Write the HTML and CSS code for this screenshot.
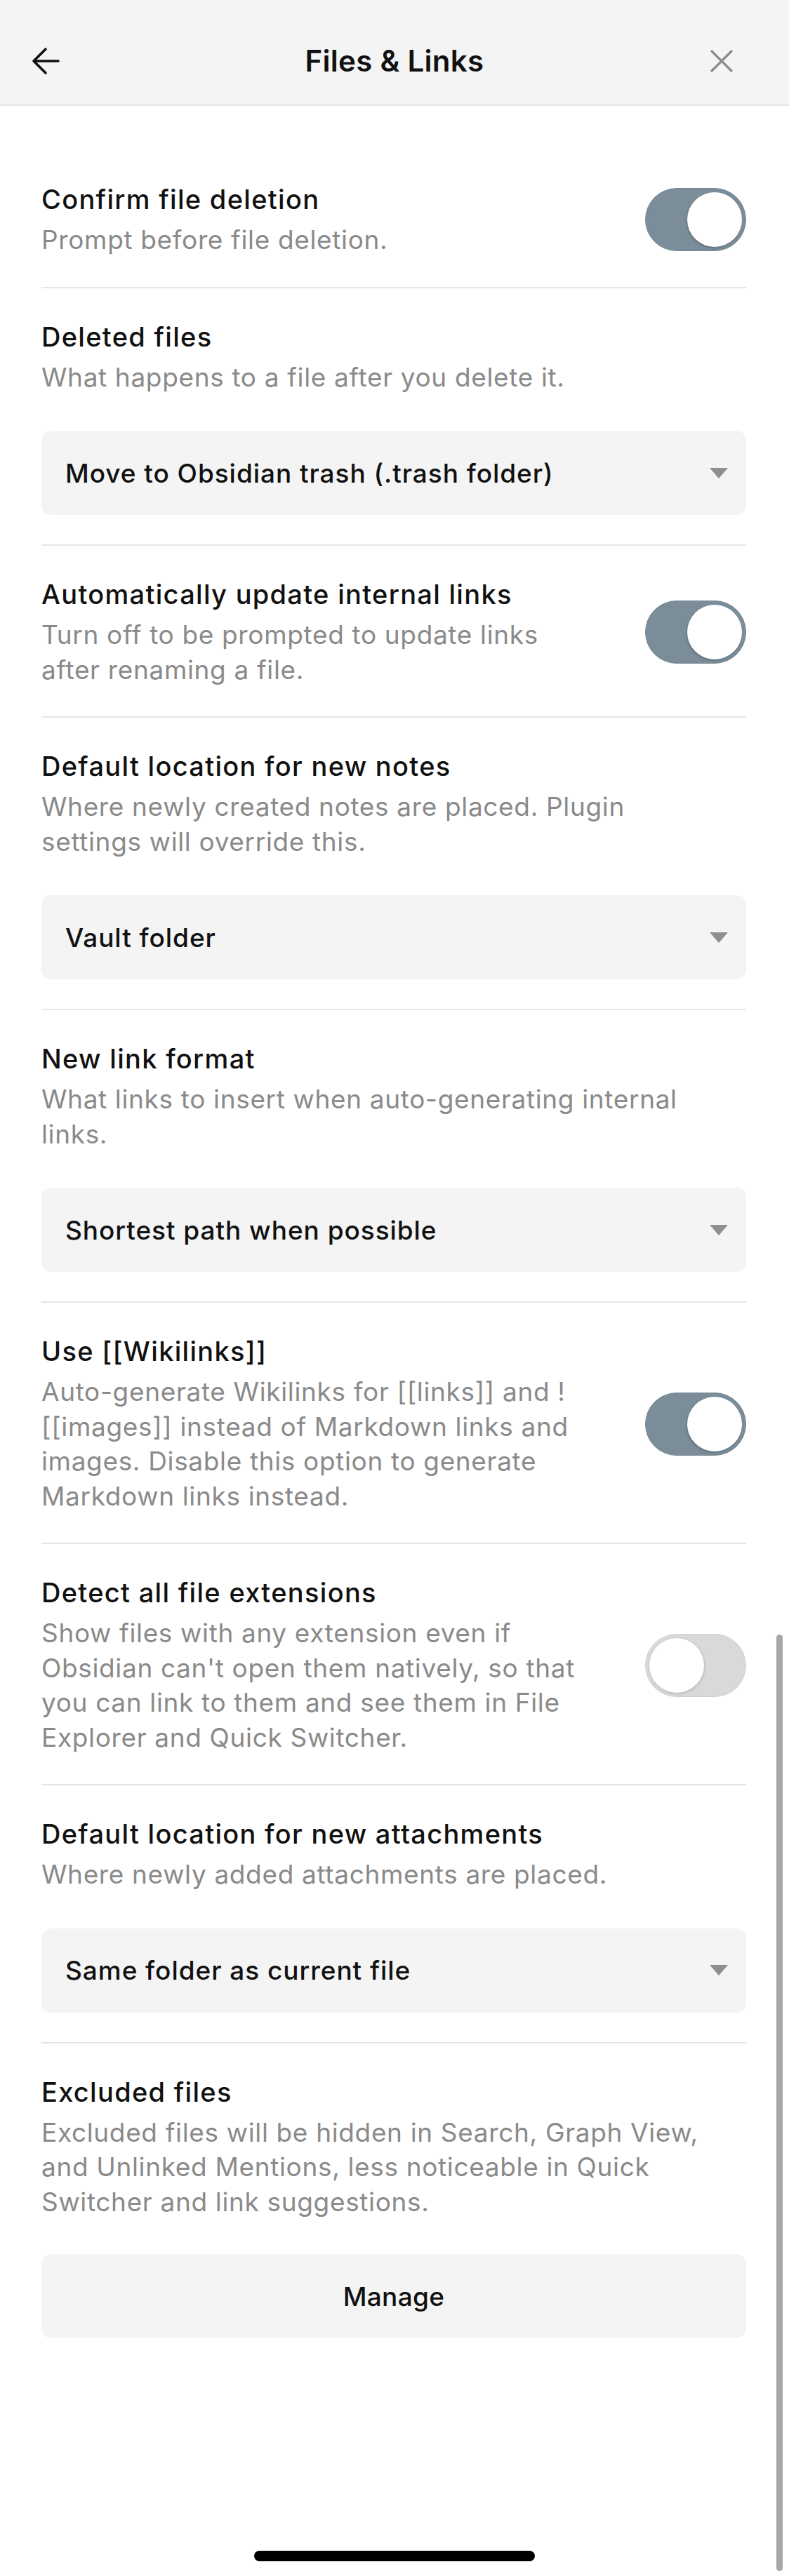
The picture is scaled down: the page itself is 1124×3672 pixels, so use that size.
FILE: index.html
```html
<!DOCTYPE html>
<html lang="en">
<head>
<meta charset="utf-8">
<title>Files &amp; Links</title>
<link rel="stylesheet" href="styles.css">
</head>
<body>
<div class="screen">
  <header class="topbar">
    <button class="icon-btn back" aria-label="Back">
      <svg viewBox="0 0 40 40" width="40" height="40"><path d="M38 20H4M20 3L3 20l17 17" fill="none" stroke="#111" stroke-width="3.6" stroke-linecap="round" stroke-linejoin="round"/></svg>
    </button>
    <h1 class="title">Files &amp; Links</h1>
    <button class="icon-btn close" aria-label="Close">
      <svg viewBox="0 0 34 34" width="34" height="34"><path d="M3 3l28 28M31 3L3 31" fill="none" stroke="#8a8a8a" stroke-width="3.2" stroke-linecap="round"/></svg>
    </button>
  </header>

  <main class="settings">
    <section class="item row">
      <div class="info">
        <div class="name">Confirm file deletion</div>
        <div class="desc">Prompt before file deletion.</div>
      </div>
      <div class="toggle on"><span class="knob"></span></div>
    </section>

    <section class="item">
      <div class="info">
        <div class="name">Deleted files</div>
        <div class="desc">What happens to a file after you delete it.</div>
      </div>
      <div class="select"><span>Move to Obsidian trash (.trash folder)</span><i class="caret"></i></div>
    </section>

    <section class="item row">
      <div class="info">
        <div class="name">Automatically update internal links</div>
        <div class="desc">Turn off to be prompted to update links after renaming a file.</div>
      </div>
      <div class="toggle on"><span class="knob"></span></div>
    </section>

    <section class="item">
      <div class="info wide">
        <div class="name">Default location for new notes</div>
        <div class="desc">Where newly created notes are placed. Plugin settings will override this.</div>
      </div>
      <div class="select"><span>Vault folder</span><i class="caret"></i></div>
    </section>

    <section class="item">
      <div class="info wide">
        <div class="name">New link format</div>
        <div class="desc">What links to insert when auto-generating internal links.</div>
      </div>
      <div class="select"><span>Shortest path when possible</span><i class="caret"></i></div>
    </section>

    <section class="item row">
      <div class="info">
        <div class="name">Use [[Wikilinks]]</div>
        <div class="desc">Auto-generate Wikilinks for [[links]] and ![[images]] instead of Markdown links and images. Disable this option to generate Markdown links instead.</div>
      </div>
      <div class="toggle on"><span class="knob"></span></div>
    </section>

    <section class="item row">
      <div class="info">
        <div class="name">Detect all file extensions</div>
        <div class="desc">Show files with any extension even if Obsidian can't open them natively, so that you can link to them and see them in File Explorer and Quick Switcher.</div>
      </div>
      <div class="toggle"><span class="knob"></span></div>
    </section>

    <section class="item">
      <div class="info wide">
        <div class="name">Default location for new attachments</div>
        <div class="desc">Where newly added attachments are placed.</div>
      </div>
      <div class="select"><span>Same folder as current file</span><i class="caret"></i></div>
    </section>

    <section class="item last">
      <div class="info">
        <div class="name">Excluded files</div>
        <div class="desc">Excluded files will be hidden in Search, Graph View, and Unlinked Mentions, less noticeable in Quick Switcher and link suggestions.</div>
      </div>
      <button class="button">Manage</button>
    </section>
  </main>

  <div class="scrollbar"></div>
  <div class="home-indicator"></div>
</div>
</body>
</html>
```

FILE: styles.css
```css
* { box-sizing: border-box; }

html, body {
  margin: 0;
  padding: 0;
  background: #fff;
}

body {
  font-family: Inter, "Noto Sans", "Liberation Sans", sans-serif;
  color: #111;
}

.screen {
  position: relative;
  width: 1124px;
  height: 3672px;
  overflow: hidden;
  background: #fff;
}

.topbar {
  height: 151px;
  background: #f4f4f4;
  border-bottom: 2px solid #e5e5e5;
  display: grid;
  grid-template-columns: 1fr auto 1fr;
  align-items: center;
  padding: 24px 45px 0 45px;
}

.icon-btn {
  border: 0;
  background: transparent;
  padding: 0;
  display: flex;
  align-items: center;
  justify-content: center;
}

.icon-btn svg { display: block; }

.back { justify-self: start; }
.close { justify-self: end; margin-right: 34px; }

.title {
  margin: 0;
  font-size: 42px;
  font-weight: 600;
  letter-spacing: 0.3px;
  color: #111;
}

.settings {
  padding: 64px 61px 0 59px;
}

.item {
  padding: 45px 0 42px;
  border-bottom: 2px solid #e6e6e6;
  display: flex;
  flex-direction: column;
}

.item.row {
  flex-direction: row;
  align-items: center;
  justify-content: space-between;
  gap: 40px;
}

.item.last { border-bottom: 0; }

.info { flex: 1; min-width: 0; }
.row .info { max-width: 790px; }
.info.wide { max-width: 940px; }

.name {
  font-size: 38px;
  line-height: 48px;
  font-weight: 500;
  color: #111;
  letter-spacing: 1.3px;
}

.desc {
  margin-top: 9px;
  font-size: 37px;
  line-height: 49.5px;
  color: #8a8a8a;
  letter-spacing: 0.65px;
}

.toggle {
  flex: none;
  width: 144px;
  height: 90px;
  border-radius: 45px;
  background: #d9d9d9;
  border: 1px solid #cfcfcf;
  padding: 5px;
  display: flex;
  justify-content: flex-start;
}

.toggle.on {
  background: #7a8d99;
  border-color: #74878f;
  justify-content: flex-end;
}

.knob {
  width: 78px;
  height: 78px;
  border-radius: 50%;
  background: #fff;
  box-shadow: -1px 2px 3px rgba(0, 0, 0, 0.18);
}

.toggle:not(.on) .knob {
  box-shadow: 1px 2px 4px rgba(0, 0, 0, 0.12), 0 0 0 1px #d0d0d0;
}

.select {
  margin-top: 52px;
  height: 120px;
  border-radius: 14px;
  background: #f4f4f4;
  display: flex;
  align-items: center;
  justify-content: space-between;
  padding: 0 26px 0 34px;
  font-size: 37px;
  font-weight: 500;
  color: #111;
  letter-spacing: 0.95px;
}

.caret {
  width: 0;
  height: 0;
  border-left: 13px solid transparent;
  border-right: 13px solid transparent;
  border-top: 15px solid #8f8f8f;
}

.button {
  margin-top: 50px;
  height: 120px;
  border: 0;
  border-radius: 14px;
  background: #f4f4f4;
  font-family: inherit;
  font-size: 37px;
  font-weight: 500;
  color: #111;
  letter-spacing: 0.3px;
}

.scrollbar {
  position: absolute;
  left: 1106px;
  top: 2330px;
  width: 9px;
  height: 1335px;
  border-radius: 5px;
  background: #a8a8a8;
}

.home-indicator {
  position: absolute;
  left: 362px;
  top: 3636px;
  width: 400px;
  height: 15px;
  border-radius: 8px;
  background: #000;
}
```
